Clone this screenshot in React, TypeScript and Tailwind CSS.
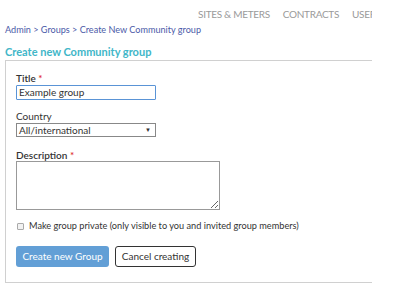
import { useState } from 'react'

const App = () => {
    const [title, setTitle] = useState('Example group')

    return (
        <div className="w-[414px] h-[292px] bg-white overflow-hidden text-[10px] text-[#333]" style={{ fontFamily: 'Lato, "Open Sans", sans-serif' }}>
            {/* top nav */}
            <div className="w-[372px] overflow-hidden h-[20px] flex items-end">
                <div className="flex gap-[13px] pl-[198px] whitespace-nowrap text-[10px] leading-[12px] tracking-[-0.3px] text-[#9a9a9a]">
                    <span>SITES &amp; METERS</span>
                    <span>CONTRACTS</span>
                    <span>USERS</span>
                </div>
            </div>

            {/* breadcrumb */}
            <div className="pl-[5px] mt-[4px] text-[9.1px] text-[#4b5aa8] leading-[12px]">
                Admin &gt; Groups &gt; Create New Community group
            </div>

            {/* heading */}
            <h1 className="pl-[5px] mt-[9px] text-[11px] font-bold text-[#41b6c8] leading-[14px]">
                Create new Community group
            </h1>

            {/* panel */}
            <div className="ml-[5px] mt-[1px] w-[367px] h-[223px] border-l border-t border-b border-[#d0d0d0] pl-[10px] pt-[11px]">
                <label className="block font-semibold text-[10px] leading-[12px]">
                    Title <span className="text-[#e03030]">*</span>
                </label>
                <input
                    value={title}
                    onChange={(e) => setTitle(e.target.value)}
                    className="block mt-[1px] w-[140px] h-[15px] border border-[#5a94d6] px-[2px] text-[10px] outline-none rounded-[1px]"
                />

                <label className="block mt-[10px] text-[10px] leading-[12px]">Country</label>
                <div className="relative mt-[1px] w-[140px] h-[14px] border border-[#888] flex items-center px-[2px] text-[10px]">
                    <span>All/international</span>
                    <span className="absolute right-[4px] top-[3px] text-[6px] leading-none">▼</span>
                </div>

                <label className="block mt-[12px] font-semibold text-[10px] leading-[12px]">
                    Description <span className="text-[#e03030]">*</span>
                </label>
                <textarea className="block mt-[0px] w-[204px] h-[49px] border border-[#999] outline-none" />

                <div className="flex items-center gap-[5px] mt-[10px] ml-[1px] h-[12px]">
                    <span className="w-[7px] h-[7px] border border-[#aaa] bg-[#f2f2f2] rounded-[1px]" />
                    <span className="text-[9.2px]">Make group private (only visible to you and invited group members)</span>
                </div>

                <div className="flex gap-[6px] mt-[14px]">
                    <button className="w-[93px] h-[21px] rounded-[3px] bg-[#629fd6] text-white text-[10px]">
                        Create new Group
                    </button>
                    <button className="w-[81px] h-[21px] rounded-[3px] border border-[#333] bg-white text-[10px]">
                        Cancel creating
                    </button>
                </div>
            </div>
        </div>
    )
}

export default App
